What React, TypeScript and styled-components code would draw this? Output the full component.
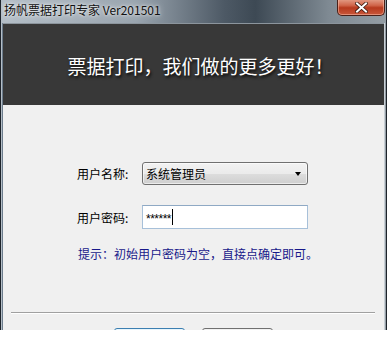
import React from "react";
import styled, { createGlobalStyle } from "styled-components";

const Global = createGlobalStyle`
  html, body { margin: 0; padding: 0; background: #ffffff; }
  body { font-family: "Noto Sans CJK SC", "Noto Sans", sans-serif; }
  * { box-sizing: border-box; }
`;

const Window = styled.div`
  width: 387px;
  height: 330px;
  overflow: hidden;
  display: flex;
  flex-direction: column;
  background: linear-gradient(90deg, #b4bec7 0%, #9aa5af 35%, #4d5965 58%, #3d4954 66%, #7f8a93 85%, #959ea5 100%);
  box-shadow: inset 1px 0 0 #1d232a, inset -1px 0 0 #1d232a;
`;

const TitleBar = styled.div`
  height: 23px;
  flex: none;
  display: flex;
  align-items: flex-start;
  justify-content: space-between;
  padding: 0 2px 0 4px;
`;

const Title = styled.div`
  font-size: 12px;
  line-height: 20px;
  color: #101010;
  white-space: nowrap;
  text-shadow: 0 0 6px rgba(255, 255, 255, 0.8), 0 0 3px rgba(255, 255, 255, 0.8);
`;

const CloseButton = styled.div`
  width: 48px;
  height: 17px;
  margin-top: -1px;
  border: 1px solid #4a2018;
  border-top: none;
  border-radius: 0 0 5px 5px;
  background: linear-gradient(180deg, #e4a08a 0%, #d0654a 40%, #b73a1e 55%, #c8573a 100%);
  box-shadow: inset 0 0 0 1px rgba(255, 200, 180, 0.5);
  display: flex;
  align-items: center;
  justify-content: center;
`;

const Client = styled.div`
  flex: 1;
  margin: 0 3px;
  border-top: 1px solid #8c959d;
  display: flex;
  flex-direction: column;
  background: #f0f0f0;
  box-shadow: 1px 0 0 #c9d0d6, -1px 0 0 #6c7c8c;
`;

const Header = styled.div`
  height: 81px;
  flex: none;
  background: #383838;
  display: flex;
  align-items: center;
  justify-content: center;
  padding-left: 14px;
  padding-top: 1px;
`;

const Slogan = styled.div`
  color: #ffffff;
  font-size: 19px;
  text-shadow: 1px 2px 3px rgba(0, 0, 0, 0.9);
`;

const Body = styled.div`
  flex: 1;
  display: flex;
  flex-direction: column;
  padding-top: 57px;
`;

const Form = styled.div`
  display: grid;
  grid-template-columns: 65px 166px;
  row-gap: 20px;
  align-items: center;
  padding-left: 74px;
`;

const Label = styled.div`
  font-size: 12px;
  color: #000000;
  white-space: nowrap;
`;

const Combo = styled.div`
  height: 23px;
  border: 1px solid #707070;
  border-radius: 3px;
  background: linear-gradient(180deg, #f2f2f2 0%, #ebebeb 50%, #dddddd 51%, #cfcfcf 100%);
  box-shadow: inset 0 0 0 1px rgba(255, 255, 255, 0.6);
  display: flex;
  align-items: center;
  justify-content: space-between;
  padding: 0 6px 0 3px;
  font-size: 12px;
  color: #000;
`;

const Arrow = styled.div`
  width: 0;
  height: 0;
  border-left: 3.5px solid transparent;
  border-right: 3.5px solid transparent;
  border-top: 4px solid #000;
`;

const Input = styled.div`
  height: 24px;
  border: 1px solid #a7c0d9;
  border-top-color: #8fa9c4;
  background: #ffffff;
  display: flex;
  align-items: center;
  padding-left: 3px;
  font-size: 12px;
  color: #000;
`;

const Stars = styled.span`
  font-family: "Liberation Sans", Arial, sans-serif;
  font-size: 12px;
  letter-spacing: -0.5px;
  line-height: 12px;
  margin-top: 3px;
`;

const Caret = styled.span`
  width: 1px;
  height: 16px;
  background: #000;
  margin-left: 1px;
`;

const Hint = styled.div`
  margin-top: 16px;
  padding-left: 75px;
  font-size: 12px;
  color: #18188a;
  white-space: nowrap;
`;

const Separator = styled.div`
  margin: 50px 9px 0 8px;
  height: 2px;
  border-top: 1px solid #a0a0a0;
  border-bottom: 1px solid #ffffff;
`;

const Buttons = styled.div`
  display: flex;
  gap: 17px;
  padding-left: 111px;
  margin-top: 14px;
`;

const Button = styled.div<{ $primary?: boolean }>`
  width: 71px;
  height: 23px;
  flex: none;
  border: 1px solid ${(p) => (p.$primary ? "#3c7fb1" : "#707070")};
  border-radius: 3px;
  background: ${(p) =>
    p.$primary
      ? "linear-gradient(180deg, #eaf6fd 0%, #d9f0fc 50%, #bee6fd 51%, #a7d9f5 100%)"
      : "linear-gradient(180deg, #f2f2f2 0%, #ebebeb 50%, #dddddd 51%, #cfcfcf 100%)"};
`;

export default function App() {
  return (
    <>
      <Global />
      <Window>
        <TitleBar>
          <Title>扬帆票据打印专家 Ver201501</Title>
          <CloseButton>
            <svg width="13" height="11" viewBox="0 0 13 11">
              <path d="M2 1.5 L11 9.5 M11 1.5 L2 9.5" stroke="#3a1a10" strokeWidth="3.6" strokeLinecap="square" />
              <path d="M2 1.5 L11 9.5 M11 1.5 L2 9.5" stroke="#ffffff" strokeWidth="2" strokeLinecap="square" />
            </svg>
          </CloseButton>
        </TitleBar>
        <Client>
          <Header>
            <Slogan>票据打印，我们做的更多更好！</Slogan>
          </Header>
          <Body>
            <Form>
              <Label>用户名称:</Label>
              <Combo>
                <span>系统管理员</span>
                <Arrow />
              </Combo>
              <Label>用户密码:</Label>
              <Input>
                <Stars>******</Stars>
                <Caret />
              </Input>
            </Form>
            <Hint>提示：初始用户密码为空，直接点确定即可。</Hint>
            <Separator />
            <Buttons>
              <Button $primary />
              <Button />
            </Buttons>
          </Body>
        </Client>
      </Window>
    </>
  );
}
